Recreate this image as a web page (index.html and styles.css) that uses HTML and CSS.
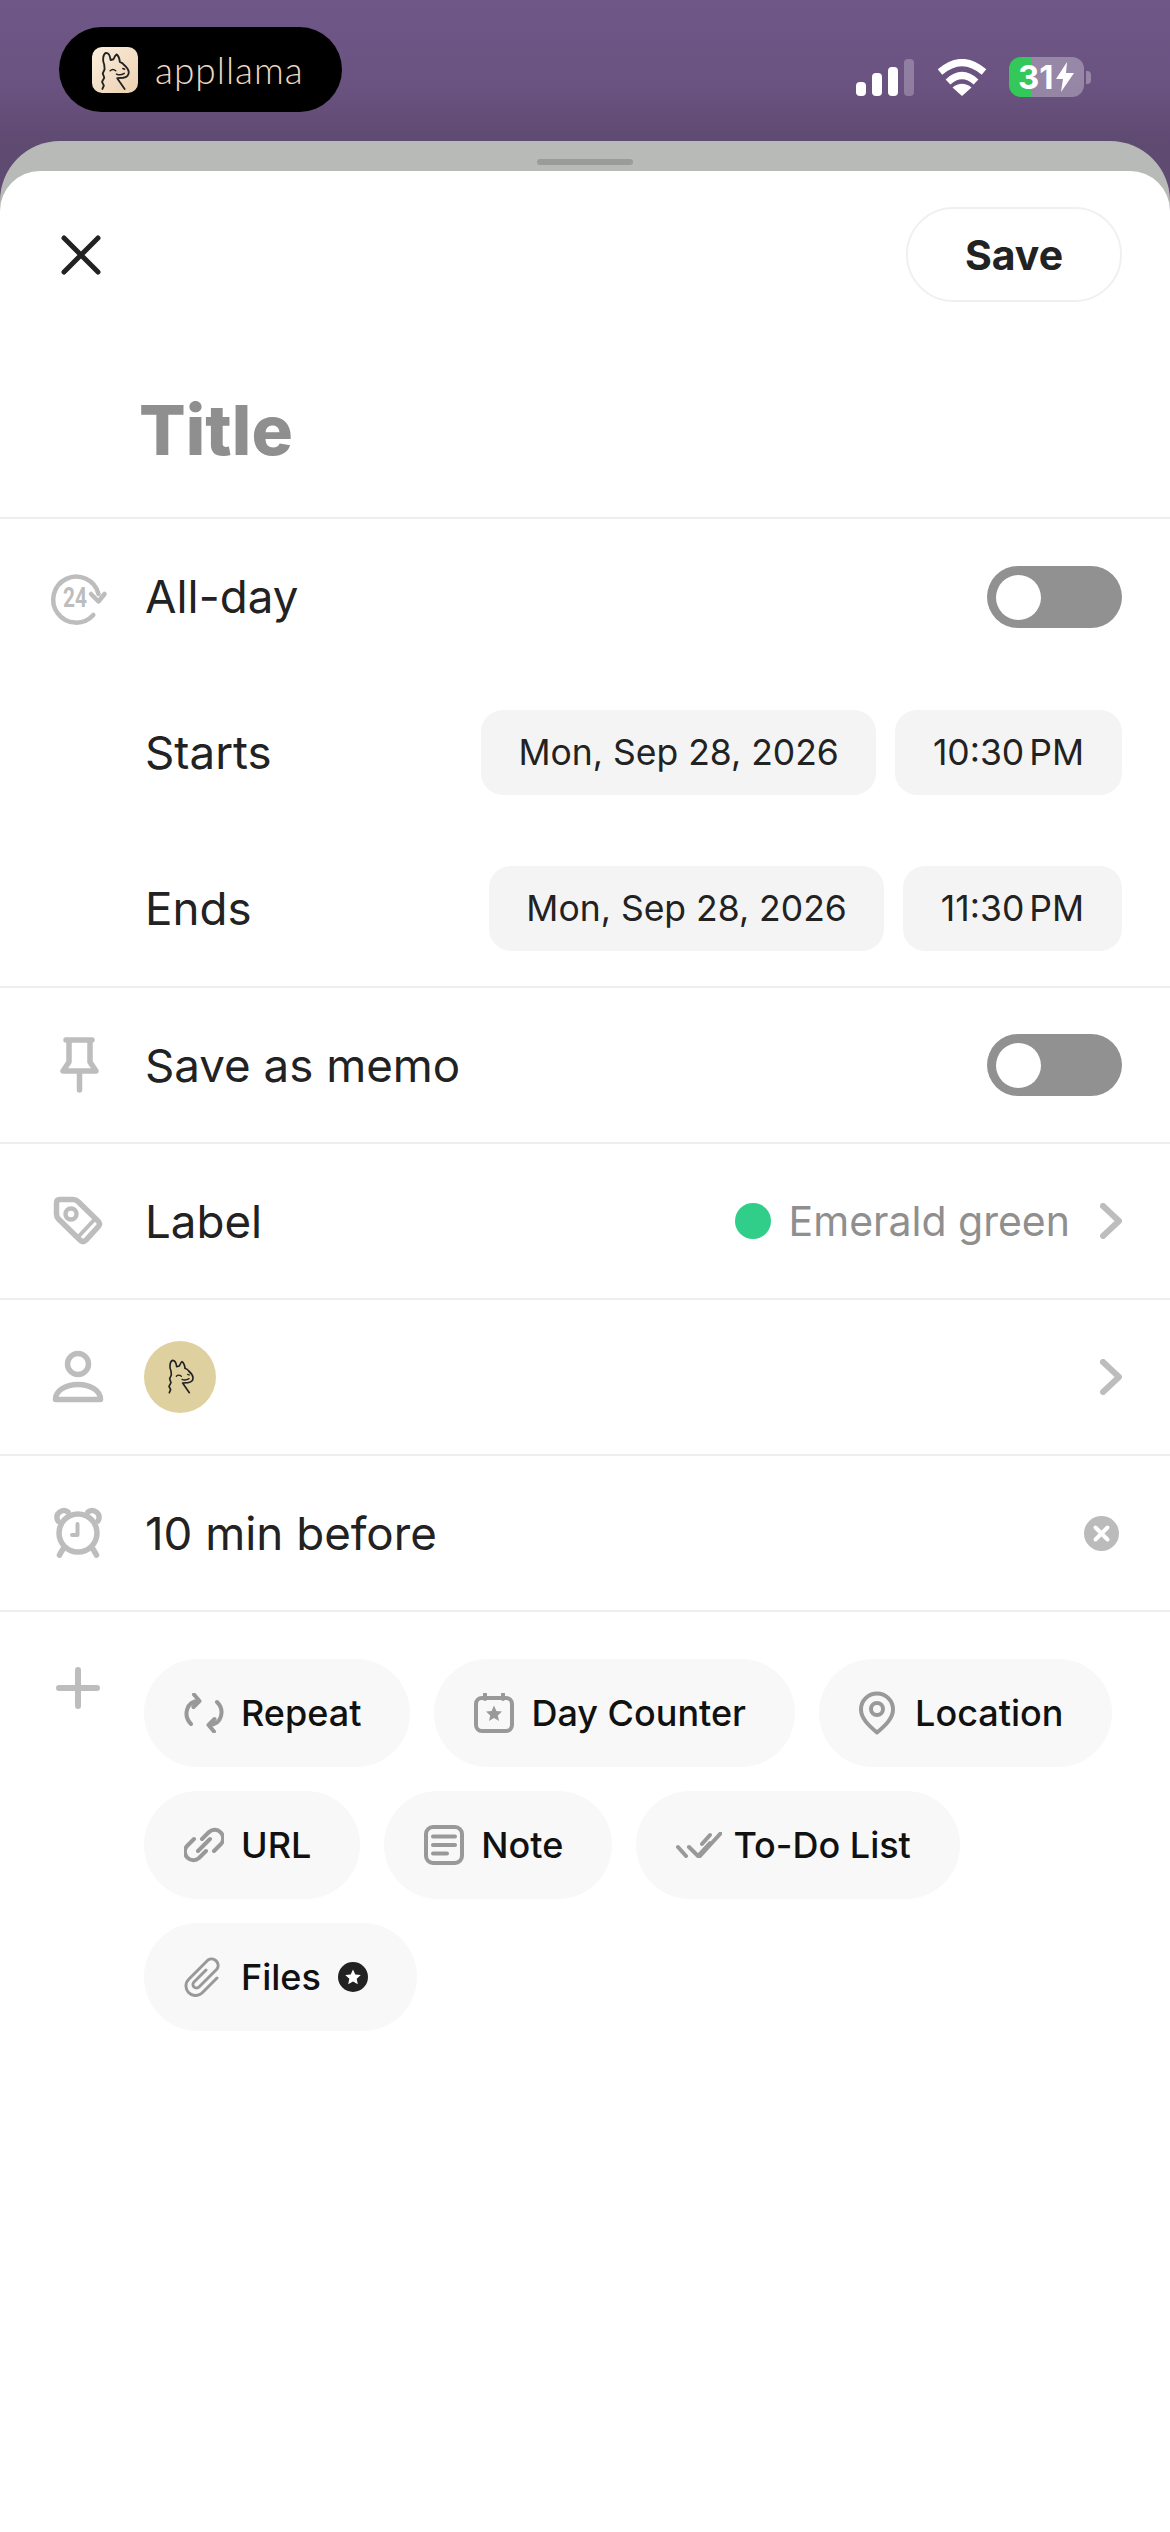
FILE: index.html
```html
<!DOCTYPE html>
<html lang="en">
<head>
  <meta charset="UTF-8">
  <meta name="viewport" content="width=device-width, initial-scale=1.0">
  <title>New event</title>
  <link rel="stylesheet" href="styles.css">
</head>
<body>
  <svg class="defs" width="0" height="0">
    <symbol id="llama" viewBox="0 0 216 216">
      <path d="M76 155 80 146 75 136 81 125 77 113 82 102 81 90C75 78 78 60 86 58 93 58 97 68 98 77L106 75C108 70 111 64 114 62 119 65 122 72 123 82 128 84 132 86 134 90 141 96 146 102 147 109 148 118 142 124 132 125L116 126 122 135 136 155" fill="none" stroke="#222" stroke-width="5" stroke-linecap="round" stroke-linejoin="round"/>
      <path d="M97 106Q104 99 112 106M114 115Q124 120 135 113M131 100 136 102" fill="none" stroke="#222" stroke-width="4" stroke-linecap="round"/>
    </symbol>
  </svg>

  <div class="status">
    <div class="ad-pill">
      <span class="ad-icon"><svg class="ad-llama" viewBox="48 42 124 124"><use href="#llama" width="216" height="216"/></svg></span>
      <span class="ad-name">appllama</span>
    </div>
    <div class="status-right">
      <div class="signal"><i class="s1"></i><i class="s2"></i><i class="s3"></i><i class="s4"></i></div>
      <svg class="wifi" viewBox="0 0 50 37">
        <path d="M3 13Q25-6 47 13" fill="none" stroke="#fff" stroke-width="7"/>
        <path d="M11 23Q25 10 39 23" fill="none" stroke="#fff" stroke-width="7"/>
        <path d="M25 37 15.500 28.500Q25 21 34.500 28.500Z" fill="#fff"/>
      </svg>
      <div class="battery">
        <span>31</span>
        <svg class="bolt" viewBox="0 0 18 30"><path d="M11 0 0 17H7L5 30 18 11H10Z" fill="#fff"/></svg>
      </div>
      <span class="battery-cap"></span>
    </div>
  </div>

  <div class="back-sheet">
    <div class="handle"></div>
    <div class="sheet">
      <div class="header">
        <svg class="close" viewBox="0 0 40 40"><path d="M3 3 37 37M37 3 3 37" stroke="#222" stroke-width="5" stroke-linecap="round"/></svg>
        <button class="save">Save</button>
      </div>

      <div class="title-row">Title</div>

      <div class="group">
        <div class="row">
          <svg class="slot" viewBox="0 0 60 60">
            <path d="M45.300 48A23 23 0 1 1 50.500 27" fill="none" stroke="#bdbdbd" stroke-width="4.500" stroke-linecap="round"/>
            <path d="M43 27l7.500 7.500L56.500 27" fill="none" stroke="#bdbdbd" stroke-width="4.500" stroke-linecap="round" stroke-linejoin="round"/>
            <text class="icon-24" x="15" y="39.500" textLength="24" lengthAdjust="spacingAndGlyphs">24</text>
          </svg>
          <span class="label">All-day</span>
          <div class="toggle"><i></i></div>
        </div>
        <div class="row">
          <span class="slot"></span>
          <span class="label">Starts</span>
          <div class="when">
            <span class="when-btn">Mon, Sep 28, 2026</span>
            <span class="when-btn time">10:30 PM</span>
          </div>
        </div>
        <div class="row">
          <span class="slot"></span>
          <span class="label">Ends</span>
          <div class="when">
            <span class="when-btn">Mon, Sep 28, 2026</span>
            <span class="when-btn time">11:30 PM</span>
          </div>
        </div>
      </div>

      <div class="row single">
        <svg class="slot" viewBox="0 0 60 60">
          <path d="M18 5H44M21 5V27L15 36H48L42 27V5M31.500 36V55" fill="none" stroke="#bdbdbd" stroke-width="5.500" stroke-linecap="round" stroke-linejoin="round"/>
        </svg>
        <span class="label">Save as memo</span>
        <div class="toggle"><i></i></div>
      </div>

      <div class="row single">
        <svg class="slot" viewBox="0 0 60 60" fill="none" stroke="#bdbdbd">
          <path d="M12 8.500H25Q28 8.500 30 10.500L50 30Q53 33 50 36L38 49Q35 52 32 49L10.500 28Q8.500 26 8.500 23V12Q8.500 8.500 12 8.500Z" stroke-width="5.500"/>
          <circle cx="23" cy="23" r="5.500" stroke-width="4.500"/>
          <path d="M31 45 46 29" stroke-width="4"/>
        </svg>
        <span class="label">Label</span>
        <div class="push">
          <i class="dot"></i>
          <span class="value">Emerald green</span>
          <svg class="chev" viewBox="0 0 22 36"><path d="M3 3 19 18 3 33" fill="none" stroke="#bdbdbd" stroke-width="6" stroke-linecap="round" stroke-linejoin="round"/></svg>
        </div>
      </div>

      <div class="row single">
        <svg class="slot" viewBox="0 0 60 60" fill="none" stroke="#bdbdbd" stroke-width="5.500">
          <circle cx="30" cy="17" r="10.500"/>
          <path d="M7.500 52.500C7.500 44 17 37.500 30 37.500S52.500 44 52.500 52.500Z" stroke-linejoin="round"/>
        </svg>
        <span class="avatar"><svg viewBox="0 0 216 216"><use href="#llama" width="216" height="216"/></svg></span>
        <div class="push">
          <svg class="chev" viewBox="0 0 22 36"><path d="M3 3 19 18 3 33" fill="none" stroke="#bdbdbd" stroke-width="6" stroke-linecap="round" stroke-linejoin="round"/></svg>
        </div>
      </div>

      <div class="row single">
        <svg class="slot" viewBox="0 0 60 60" fill="none" stroke="#bdbdbd" stroke-width="5.500" stroke-linecap="round">
          <circle cx="30" cy="30" r="19"/>
          <path d="M10 18C6 11 14 5 20 9M50 18C54 11 46 5 40 9M15 46 11.500 52M45 46 48.500 52"/>
          <path d="M29.500 21V32H24" stroke-width="4" stroke-linejoin="round"/>
        </svg>
        <span class="label">10 min before</span>
        <div class="push">
          <svg class="clear" viewBox="0 0 35 35"><circle cx="17.500" cy="17.500" r="17.500" fill="#bbb"/><path d="M11.500 11.500 23.500 23.500M23.500 11.500 11.500 23.500" stroke="#fff" stroke-width="4" stroke-linecap="round"/></svg>
        </div>
      </div>

      <div class="extras">
        <svg class="slot" viewBox="0 0 60 60"><path d="M30 11V47M11 29H49" stroke="#bdbdbd" stroke-width="6" stroke-linecap="round"/></svg>
        <div class="chips">
          <div class="chip">
            <svg class="chip-icon" viewBox="0 0 40 40">
              <path d="M7 31C-1 23 2 8 15 8M10 1.500 15.500 8 9.500 14M33 9C41 17 38 32 25 32M30.500 26 24.500 32 30 38.500"/>
            </svg>
            Repeat
          </div>
          <div class="chip">
            <svg class="chip-icon" viewBox="0 0 40 40">
              <rect x="2" y="5" width="36" height="33" rx="6"/>
              <path d="M11 1V6M29 1V6"/>
              <path class="fill" d="M20 12.500 22.400 18 28 18.600 23.800 22.400 25 28 20 25.100 15 28 16.200 22.400 12 18.600 17.600 18Z"/>
            </svg>
            Day Counter
          </div>
          <div class="chip">
            <svg class="chip-icon pin" viewBox="0 0 36 44">
              <path d="M18 41.500C9 34 2 27 2 18.500A16 16 0 0 1 34 18.500C34 27 27 34 18 41.500Z"/>
              <circle cx="18" cy="18" r="6"/>
            </svg>
            Location
          </div>
          <div class="chip">
            <svg class="chip-icon" viewBox="0 0 40 40">
              <path d="M18 14 25 7A8.500 8.500 0 0 1 37 19L30 26M22 26 15 33A8.500 8.500 0 0 1 3 21L10 14M14 26 26 14"/>
            </svg>
            URL
          </div>
          <div class="chip">
            <svg class="chip-icon" viewBox="0 0 40 40">
              <rect x="2" y="2" width="36" height="36" rx="7"/>
              <path d="M9 11.500H31M9 20H31M9 28.500H23"/>
            </svg>
            Note
          </div>
          <div class="chip">
            <svg class="chip-icon todo" viewBox="0 0 46 26">
              <path d="M2 15 10 24M13 15 22 24 34 11M26 12 34 3M24 24 45 1" />
            </svg>
            To-Do List
          </div>
          <div class="chip">
            <svg class="chip-icon clip" viewBox="0 0 40 40">
              <path d="M22 13 10 25A3.500 3.500 0 0 0 15 30L33 12A6.500 6.500 0 0 0 24 3L5 22A9.500 9.500 0 0 0 18 36L33 21"/>
            </svg>
            Files
            <span class="star-badge"><svg viewBox="0 0 30 30"><path d="M15 7.500 17.300 12.500 22.800 13.100 18.700 16.800 19.800 22.200 15 19.500 10.200 22.200 11.300 16.800 7.200 13.100 12.700 12.500Z" fill="#fff"/></svg></span>
          </div>
        </div>
      </div>
    </div>
  </div>
</body>
</html>
```

FILE: styles.css
```css
* {
  box-sizing: border-box;
}
html, body {
  margin: 0;
  height: 2532px;
  overflow: hidden;
}
body {
  font-family: Inter, "Liberation Sans", sans-serif;
  color: #222;
  background: #5f4a72;
}
.defs {
  display: block;
  height: 0;
}

/* status bar */
.status {
  display: flex;
  justify-content: space-between;
  height: 141px;
  padding: 27px 79px 0 59px;
  background: linear-gradient(#6f5788, #6a5380 60%, #5f4a72);
}
.ad-pill {
  display: flex;
  align-items: center;
  width: 283px;
  height: 85px;
  padding: 0 0 0 33px;
  gap: 17px;
  background: #000;
  border-radius: 43px;
}
.ad-icon {
  display: block;
  width: 46px;
  height: 46px;
  border-radius: 10px;
  background: linear-gradient(135deg, #fbeedd, #ecd0b0);
}
.ad-llama {
  display: block;
  width: 46px;
  height: 46px;
}
.ad-name {
  font-family: Lato, sans-serif;
  font-weight: 300;
  font-size: 37px;
  line-height: 46px;
  letter-spacing: 1px;
  color: #ecd9c3;
}
.status-right {
  display: flex;
  align-items: flex-start;
  padding-top: 30px;
}
.signal {
  display: flex;
  align-items: flex-end;
  gap: 6px;
  height: 37px;
  margin-top: 2px;
}
.signal i {
  display: block;
  width: 10px;
  border-radius: 4px;
  background: #fff;
}
.s1 { height: 14px; }
.s2 { height: 23px; }
.s3 { height: 29px; }
.signal .s4 { height: 37px; background: rgba(255, 255, 255, .25); }
.wifi {
  width: 50px;
  height: 37px;
  margin: 2px 22px 0 23px;
}
.battery {
  display: flex;
  align-items: center;
  gap: 2px;
  width: 75px;
  height: 40px;
  padding-left: 9px;
  border-radius: 12px;
  background: linear-gradient(90deg, #34c759 31%, rgba(255, 255, 255, .3) 31%);
  color: #fff;
  font-weight: 700;
  font-size: 33px;
}
.bolt {
  width: 18px;
  height: 30px;
}
.battery-cap {
  width: 5px;
  height: 13px;
  margin: 14px 0 0 2px;
  border-radius: 0 4px 4px 0;
  background: rgba(255, 255, 255, .3);
}

/* sheet */
.back-sheet {
  height: 2391px;
  padding-top: 18px;
  background: #b8bab7;
  border-radius: 60px 60px 0 0;
}
.handle {
  width: 96px;
  height: 6px;
  margin: 0 auto 6px;
  border-radius: 3px;
  background: #9a9c99;
}
.sheet {
  height: 2361px;
  background: #fff;
  border-radius: 40px 40px 0 0;
  overflow: hidden;
}
.header {
  display: flex;
  align-items: center;
  justify-content: space-between;
  padding: 36px 48px 0 61px;
}
.close {
  width: 40px;
  height: 40px;
}
.save {
  width: 216px;
  height: 95px;
  padding: 0;
  border: 2px solid #f0f0f0;
  border-radius: 48px;
  background: #fff;
  color: #222;
  font-family: inherit;
  font-weight: 700;
  font-size: 41px;
}
.title-row {
  display: flex;
  align-items: center;
  height: 217px;
  padding: 40px 0 0 139px;
  border-bottom: 2px solid #eee;
  color: #8f8f8f;
  font-weight: 800;
  font-size: 69px;
}

/* rows */
.group {
  display: flex;
  flex-direction: column;
  height: 469px;
  border-bottom: 2px solid #eee;
}
.row {
  display: flex;
  align-items: center;
  flex: 1;
  gap: 37px;
  padding: 0 48px;
}
.row.single {
  flex: none;
  height: 156px;
  border-bottom: 2px solid #eee;
}
.slot {
  display: block;
  flex: none;
  width: 60px;
  height: 60px;
}
.icon-24 {
  font-family: Roboto, sans-serif;
  font-weight: 700;
  font-size: 27px;
  fill: #bdbdbd;
}
.label {
  font-size: 45.700px;
  color: #222;
}
.toggle {
  width: 135px;
  height: 62px;
  margin-left: auto;
  padding: 9px;
  border-radius: 31px;
  background: #919191;
}
.toggle i {
  display: block;
  width: 45px;
  height: 45px;
  border-radius: 50%;
  background: #fff;
}
.when {
  display: flex;
  gap: 19px;
  margin-left: auto;
}
.when-btn {
  display: block;
  height: 85px;
  padding: 0 37px;
  border-radius: 22px;
  background: #f4f4f4;
  font-size: 35.500px;
  line-height: 85px;
  color: #222;
}
.time {
  padding: 0 38px;
  word-spacing: -5px;
}
.push {
  display: flex;
  align-items: center;
  margin-left: auto;
}
.dot {
  display: block;
  width: 36px;
  height: 36px;
  margin-right: 18px;
  border-radius: 50%;
  background: #30ce88;
}
.value {
  margin-right: 30px;
  font-size: 41px;
  color: #8f8f8f;
}
.chev {
  display: block;
  width: 22px;
  height: 36px;
}
.clear {
  display: block;
  width: 35px;
  height: 35px;
  margin-right: 3px;
}
.avatar {
  display: block;
  width: 72px;
  height: 72px;
  margin-left: -1px;
  border-radius: 50%;
  background: #dfd19f;
}
.avatar svg {
  display: block;
  width: 72px;
  height: 72px;
}

/* add-on chips */
.extras {
  display: flex;
  align-items: flex-start;
  gap: 36px;
  padding: 47px 48px 0;
}
.chips {
  display: flex;
  flex-wrap: wrap;
  gap: 24px;
}
.chip {
  display: flex;
  align-items: center;
  gap: 17px;
  height: 108px;
  padding: 0 49px 0 40px;
  border-radius: 54px;
  background: #f8f8f8;
  font-weight: 500;
  font-size: 36px;
  color: #111;
}
.chip-icon {
  flex: none;
  width: 40px;
  height: 40px;
  fill: none;
  stroke: #999;
  stroke-width: 4;
  stroke-linecap: round;
  stroke-linejoin: round;
}
.chip-icon .fill {
  fill: #999;
  stroke: none;
}
.chip-icon.pin {
  width: 36px;
  height: 44px;
  margin-right: 3px;
}
.chip-icon.todo {
  width: 46px;
  height: 26px;
  margin-right: -6px;
}
.chip-icon.clip {
  stroke-width: 3;
}
.star-badge {
  display: block;
  width: 30px;
  height: 30px;
  border-radius: 50%;
  background: #222;
}
.star-badge svg {
  display: block;
}
```
